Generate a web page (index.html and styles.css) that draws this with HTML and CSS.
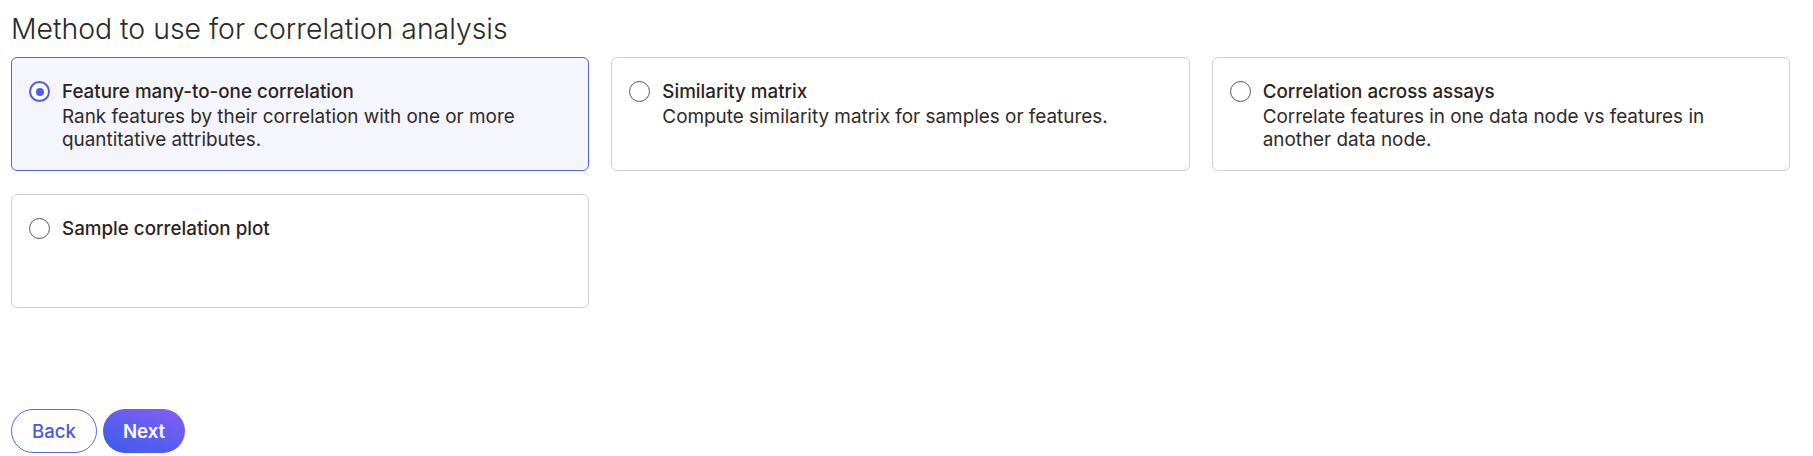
FILE: index.html
```html
<!DOCTYPE html>
<html lang="en">
<head>
    <meta charset="UTF-8">
    <meta name="viewport" content="width=device-width, initial-scale=1.0">
    <title>Correlation analysis</title>
    <link rel="stylesheet" href="styles.css">
</head>
<body>
    <div class="wizard">
        <h1>Method to use for correlation analysis</h1>

        <!-- method choices -->
        <div class="methods">
            <label class="method selected">
                <input type="radio" name="method" checked>
                <div class="method-text">
                    <div class="method-title">Feature many-to-one correlation</div>
                    <div class="method-desc">Rank features by their correlation with one or more quantitative attributes.</div>
                </div>
            </label>
            <label class="method">
                <input type="radio" name="method">
                <div class="method-text">
                    <div class="method-title">Similarity matrix</div>
                    <div class="method-desc">Compute similarity matrix for samples or features.</div>
                </div>
            </label>
            <label class="method">
                <input type="radio" name="method">
                <div class="method-text">
                    <div class="method-title">Correlation across assays</div>
                    <div class="method-desc">Correlate features in one data node vs features in another data node.</div>
                </div>
            </label>
            <label class="method">
                <input type="radio" name="method">
                <div class="method-text">
                    <div class="method-title">Sample correlation plot</div>
                </div>
            </label>
        </div>

        <div class="actions">
            <button class="btn btn-back">Back</button>
            <button class="btn btn-next">Next</button>
        </div>
    </div>

    <script>
        document.querySelectorAll(".method input").forEach(radio => {
            radio.addEventListener("change", () => {
                document.querySelectorAll(".method").forEach(m => m.classList.remove("selected"));
                radio.closest(".method").classList.add("selected");
            });
        });
    </script>
</body>
</html>
```

FILE: styles.css
```css
body {
    margin: 0;
    background: #fff;
    font-family: Inter, "Noto Sans", Arial, sans-serif;
    color: #2b2424;
}
.wizard {
    padding: 0 23px 0 11px;
}
h1 {
    margin: 0;
    padding: 12px 0 11px;
    font-size: 28.4px;
    font-weight: 300;
    line-height: 34px;
    color: #2a2a2a;
}
.methods {
    display: grid;
    grid-template-columns: repeat(3, 1fr);
    grid-auto-rows: 114px;
    gap: 23px 22px;
}
.method {
    display: flex;
    align-items: flex-start;
    gap: 12px;
    padding: 20px 16px 20px 17px;
    border: 1px solid #d2d2d2;
    border-radius: 6px;
    background: #fff;
    cursor: pointer;
}
.method.selected {
    background: #f4f5fd;
    border-color: #5563dc;
}
.method input {
    appearance: none;
    -webkit-appearance: none;
    flex: none;
    width: 21px;
    height: 21px;
    margin: 3px 0 0;
    border: 1.5px solid #555;
    border-radius: 50%;
    background: #fff;
    position: relative;
}
.method input:checked {
    border: 2.5px solid #4f5ee0;
}
.method input:checked::after {
    content: "";
    position: absolute;
    left: 50%;
    top: 50%;
    width: 8px;
    height: 8px;
    margin: -4px 0 0 -4px;
    border-radius: 50%;
    background: #4f5ee0;
}
.method-title {
    font-size: 18.8px;
    font-weight: 500;
    line-height: 27px;
    color: #2e2222;
}
.method-desc {
    font-size: 18.9px;
    line-height: 23px;
    color: #2f2a2a;
}
.actions {
    display: flex;
    gap: 6px;
    margin-top: 101px;
}
.btn {
    height: 44px;
    padding: 0 20px;
    border-radius: 22px;
    font-family: inherit;
    font-size: 18.6px;
    cursor: pointer;
}
.btn-back {
    border: 1px solid #5b68df;
    background: #fff;
    color: #4b5bd8;
    font-weight: 500;
}
.btn-next {
    border: none;
    background: linear-gradient(200deg, #8a5cf3 0%, #5d5ff0 50%, #3a5ce6 100%);
    color: #fff;
    font-weight: 600;
}
```
